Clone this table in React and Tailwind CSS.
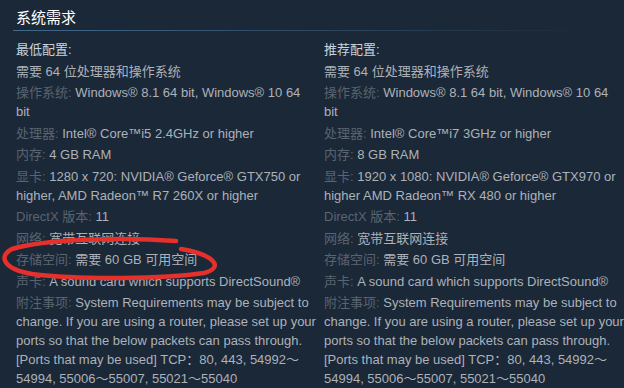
import React from 'react';

const notes =
  'System Requirements may be subject to change. If you are using a router, please set up your ports so that the below packets can pass through. [Ports that may be used] TCP：80, 443, 54992～54994, 55006～55007, 55021～55040';

const minReqs = [
  { label: '操作系统:', value: 'Windows® 8.1 64 bit, Windows® 10 64 bit' },
  { label: '处理器:', value: 'Intel® Core™i5 2.4GHz or higher' },
  { label: '内存:', value: '4 GB RAM' },
  { label: '显卡:', value: '1280 x 720: NVIDIA® Geforce® GTX750 or higher, AMD Radeon™ R7 260X or higher' },
  { label: 'DirectX 版本:', value: '11' },
  { label: '网络:', value: '宽带互联网连接' },
  { label: '存储空间:', value: '需要 60 GB 可用空间' },
  { label: '声卡:', value: 'A sound card which supports DirectSound®' },
  { label: '附注事项:', value: notes },
];

const recReqs = [
  { label: '操作系统:', value: 'Windows® 8.1 64 bit, Windows® 10 64 bit' },
  { label: '处理器:', value: 'Intel® Core™i7 3GHz or higher' },
  { label: '内存:', value: '8 GB RAM' },
  { label: '显卡:', value: '1920 x 1080: NVIDIA® Geforce® GTX970 or higher AMD Radeon™ RX 480 or higher' },
  { label: 'DirectX 版本:', value: '11' },
  { label: '网络:', value: '宽带互联网连接' },
  { label: '存储空间:', value: '需要 60 GB 可用空间' },
  { label: '声卡:', value: 'A sound card which supports DirectSound®' },
  { label: '附注事项:', value: notes },
];

function ReqColumn({ title, items }) {
  return (
    <div>
      <div className="text-[#c6d4df] mb-[2.5px]">{title}</div>
      <ul>
        <li className="mb-[2.5px]">需要 64 位处理器和操作系统</li>
        {items.map((item) => (
          <li key={item.label} className="mb-[2.5px]">
            <span className="text-[#59646f]">{item.label}</span>{' '}
            {item.value}
          </li>
        ))}
      </ul>
    </div>
  );
}

export default function App() {
  return (
    <div
      className="relative w-[624px] h-[388px] overflow-hidden bg-[#1b2838] pl-4 text-[13px] leading-[19px] text-[#acb2b8]"
      style={{ fontFamily: '"Liberation Sans", Arial, "Noto Sans CJK SC", sans-serif' }}
    >
      <div className="pt-[8px] h-[30px] text-[15px] leading-[20px] text-white">系统需求</div>
      <div className="-ml-[3px] h-px w-[580px] bg-gradient-to-r from-[#416a8e] via-[#2f4a63] to-transparent" />

      <div className="mt-[9px] grid grid-cols-[300px_300px] gap-[8px]">
        <ReqColumn title="最低配置:" items={minReqs} />
        <ReqColumn title="推荐配置:" items={recReqs} />
      </div>

      {/* red hand-drawn circle around storage row */}
      <svg className="absolute left-0 top-0 pointer-events-none" width="624" height="388">
        <path
          d="M176 241 C120 237 45 239 12 249 C-2 256 3 269 32 274 C80 280 165 279 204 273 C224 268 216 255 181 249"
          fill="none"
          stroke="#e5302c"
          strokeWidth="4.5"
          strokeLinecap="round"
        />
      </svg>
    </div>
  );
}
